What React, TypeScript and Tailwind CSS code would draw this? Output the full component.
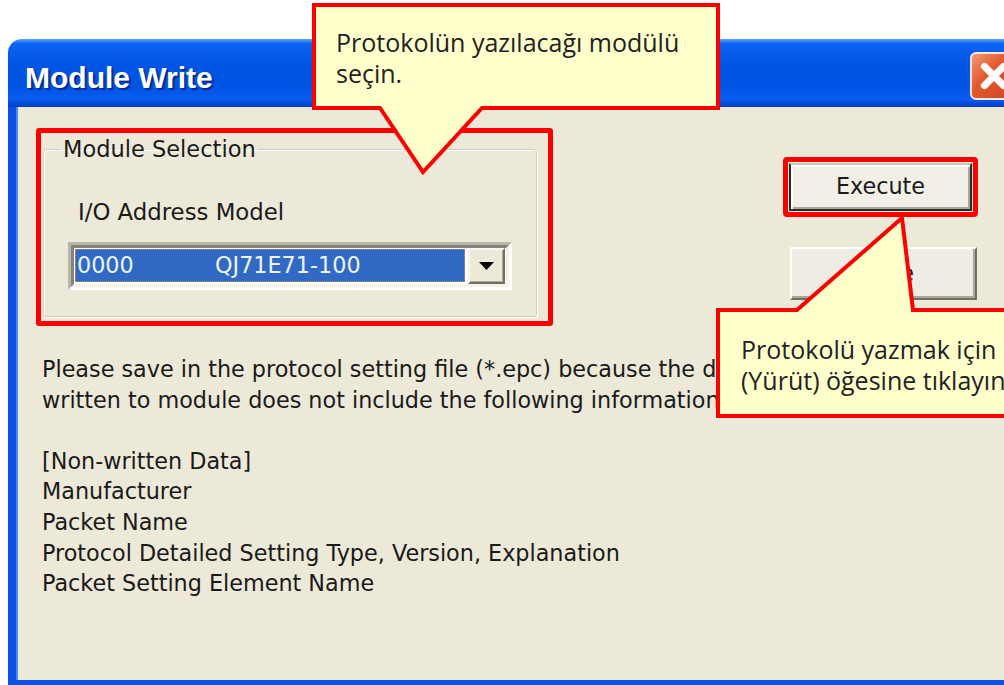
import { X } from 'lucide-react'

const infoLines = [
  'Please save in the protocol setting file (*.epc) because the data',
  'written to module does not include the following information.',
  '',
  '[Non-written Data]',
  'Manufacturer',
  'Packet Name',
  'Protocol Detailed Setting Type, Version, Explanation',
  'Packet Setting Element Name',
]

function ComboBox() {
  return (
    <div className="mt-[17px] w-[444px] h-[48px] border-[3px] border-t-[#b8b6a8] border-l-[#b8b6a8] border-b-white border-r-white">
      <div className="flex h-full border-[3px] border-t-[#86847a] border-l-[#86847a] border-b-[#f4f2e8] border-r-[#f4f2e8] bg-white pl-[1px] pt-[1px] pr-[1px]">
        <div className="flex-1 h-[33px] flex items-center bg-[#316ac5] border border-dotted border-[#c89a4a] text-[#eef3ff] pl-[1px]">
          <span className="w-[138px]">0000</span>
          <span>QJ71E71-100</span>
        </div>
        <div className="ml-[3px] w-[37px] h-[36px] -mt-[1px] flex items-center justify-center bg-[#ece9d8] border-2 border-t-[#f7f6f0] border-l-[#f7f6f0] border-b-[#716f64] border-r-[#716f64] shadow-[inset_-1px_-1px_0_#aca899]">
          <svg width="15" height="8" viewBox="0 0 15 8">
            <polygon points="0,0 15,0 7.5,8" fill="#000" />
          </svg>
        </div>
      </div>
    </div>
  )
}

export default function App() {
  return (
    <div className="relative w-[1004px] h-[685px] overflow-hidden bg-white font-['DejaVu_Sans',sans-serif] text-[22.3px] text-[#1a1a1a]">
      {/* dialog window */}
      <div className="ml-[8px] mt-[39px] w-[1022px] h-[646px] flex flex-col rounded-t-[14px] overflow-hidden">
        <div className="h-[68px] shrink-0 flex items-start justify-between pl-[17px] pr-[12px] bg-[linear-gradient(180deg,#5aa5ff_0%,#0d63f2_7%,#0055e5_35%,#0054e3_70%,#0a5cf0_88%,#003cc6_100%)]">
          <span className="mt-[22px] text-[30px] leading-[34px] font-bold text-white font-['Liberation_Sans',sans-serif] [text-shadow:2px_2px_1px_#0a2a90]">
            Module Write
          </span>
          <div className="mt-[13px] w-[48px] h-[48px] rounded-[6px] border-2 border-[#f3e6e0] bg-[linear-gradient(135deg,#f59a78_0%,#e4592f_40%,#cf4520_100%)] flex items-center justify-center">
            <X className="w-[38px] h-[38px] text-white" strokeWidth={4.5} />
          </div>
        </div>

        <div className="flex-1 flex flex-col bg-[#ece9d8] border-l-[8px] border-r-[8px] border-b-[5px] border-[#0b4fe4] shadow-[inset_2px_0_0_#4f86f0]">
          <div className="flex pl-[20px] pt-[21px]">
            {/* module selection group */}
            <div className="w-[517px] h-[198px] border-[5px] border-[#ff0000] rounded-[3px] pl-[2px] pr-[11px] pt-[3px]">
              <fieldset className="border border-[#cfcdbf] rounded-[3px] shadow-[inset_1px_1px_0_#fff,1px_1px_0_#fff] h-[181px]">
                <legend className="ml-[17px] px-[2px] leading-[26px] text-[22.5px]">Module Selection</legend>
                <div className="pl-[24px]">
                  <div className="pl-[10px] mt-[37px] leading-[26px] text-[22.8px]">I/O Address Model</div>
                  <ComboBox />
                </div>
              </fieldset>
            </div>

            {/* buttons */}
            <div className="ml-[230px] mt-[29px] flex flex-col">
              <div className="w-[195px] h-[60px] border-[5px] border-[#ff0000] rounded-[4px] p-[1px]">
                <div className="w-full h-full flex items-center justify-center bg-[#f1efe6] border-2 border-[#2a2a2a] border-t-[#c9c7ba] shadow-[inset_2px_2px_0_#fff,inset_-2px_-2px_0_#aca899]">
                  Execute
                </div>
              </div>
              <div className="mt-[30px] ml-[7px] w-[187px] h-[53px] flex items-center justify-center bg-[#efede3] border-2 border-t-white border-l-white border-b-[#716f64] border-r-[#716f64] shadow-[inset_-2px_-2px_0_#aca899]">
                Close
              </div>
            </div>
          </div>

          <div className="mt-[28px] pl-[26px] leading-[30.6px]">
            {infoLines.map((line, i) => (
              <div key={i} className="h-[30.6px] whitespace-nowrap">
                {line}
              </div>
            ))}
          </div>
        </div>
      </div>

      {/* callouts */}
      <svg className="absolute left-0 top-0 pointer-events-none" width="1004" height="685">
        <polygon
          points="314,5 718,5 718,108 482,108 423,172 380,108 314,108"
          fill="#ffffcc"
          stroke="#ff0000"
          strokeWidth="4"
        />
        <polygon
          points="718,310 797,310 902,218 913,310 1020,310 1020,416 718,416"
          fill="#ffffcc"
          stroke="#ff0000"
          strokeWidth="4"
        />
      </svg>
      <div className="absolute left-[336px] top-[27px] font-['Open_Sans',sans-serif] text-[25px] leading-[31px] text-[#222]">
        <div>Protokolün yazılacağı modülü</div>
        <div>seçin.</div>
      </div>
      <div className="absolute left-[741px] top-[334px] whitespace-nowrap font-['Open_Sans',sans-serif] text-[25px] leading-[31px] text-[#222]">
        <div>Protokolü yazmak için</div>
        <div>(Yürüt) öğesine tıklayın.</div>
      </div>
    </div>
  )
}
